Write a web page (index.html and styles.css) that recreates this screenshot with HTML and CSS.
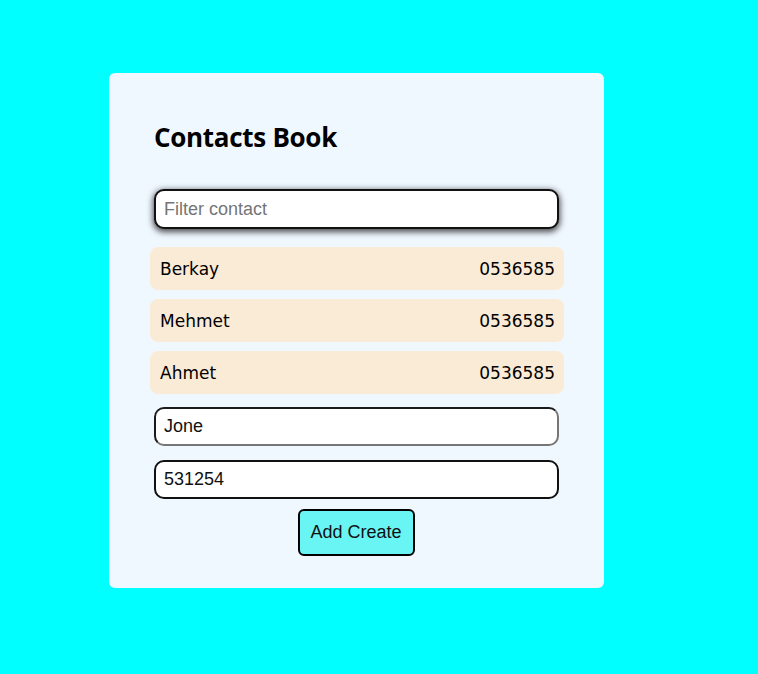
FILE: index.html
```html
<!DOCTYPE html>
<html>
<head>
<meta charset="utf-8">
<link rel="stylesheet" href="styles.css">
</head>
<body>
<div class="page">
  <div class="card">
    <h2 class="title">Contacts Book</h2>
    <input class="field field-filter" type="text" placeholder="Filter contact">
    <ul class="list">
      <li class="item"><span>Berkay</span><span>0536585</span></li>
      <li class="item"><span>Mehmet</span><span>0536585</span></li>
      <li class="item"><span>Ahmet</span><span>0536585</span></li>
    </ul>
    <input class="field field-name" type="text" value="Jone">
    <input class="field field-phone" type="text" value="531254">
    <div class="actions">
      <button class="btn" type="button">Add Create</button>
    </div>
  </div>
</div>
</body>
</html>
```
FILE: styles.css
```css
html, body {
  margin: 0;
  padding: 0;
  background: #00ffff;
  height: 100%;
}
.page {
  padding: 73px 0 0 109px;
}
.card {
  width: 495px;
  box-sizing: border-box;
  background: #f0f8ff;
  border-radius: 6px;
  padding: 48px 46px 32px 45px;
  display: flex;
  flex-direction: column;
}
.title {
  margin: 0 0 36px 0;
  font-family: "Open Sans", "Liberation Sans", sans-serif;
  font-weight: 700;
  font-size: 26px;
  line-height: 32px;
  color: #000;
  letter-spacing: -0.3px;
}
.field {
  display: block;
  width: 405px;
  height: 39px;
  box-sizing: border-box;
  border: 2px solid #111;
  border-radius: 10px;
  background: #fff;
  padding: 0 8px;
  font-family: "Liberation Sans", Arial, sans-serif;
  font-size: 18px;
  color: #111;
  outline: none;
}
.field::placeholder {
  color: #757575;
}
.field-filter {
  height: 40px;
  box-shadow: 0 2px 6px 1px rgba(0, 0, 0, 0.7);
}
.field-name {
  border-color: #1a1a1a #767676 #767676 #1a1a1a;
  margin-top: 13px;
}
.field-phone {
  margin-top: 14px;
}
.list {
  list-style: none;
  margin: 18px -6px 0 -4px;
  padding: 0;
  display: flex;
  flex-direction: column;
  gap: 9px;
}
.item {
  height: 43px;
  box-sizing: border-box;
  background: #faebd7;
  border-radius: 8px;
  padding: 0 9px 0 10px;
  display: flex;
  align-items: center;
  justify-content: space-between;
  font-family: "Comic Sans MS", "DejaVu Sans", sans-serif;
  font-size: 17px;
  color: #000;
}
.actions {
  display: flex;
  justify-content: center;
  margin-top: 10px;
}
.btn {
  width: 117px;
  height: 47px;
  box-sizing: border-box;
  background: #6af5f5;
  border: 2px solid #000;
  border-radius: 6px;
  font-family: "Liberation Sans", Arial, sans-serif;
  font-size: 18px;
  color: #111;
  padding: 0;
}
```
